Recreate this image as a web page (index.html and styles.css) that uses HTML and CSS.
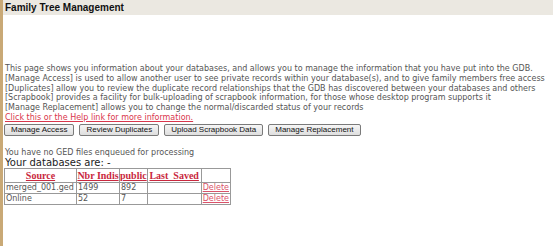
FILE: index.html
```html
<!DOCTYPE html>
<html lang="en">
<head>
  <meta charset="UTF-8">
  <title>Family Tree Management</title>
  <link rel="stylesheet" href="styles.css">
</head>
<body>
  <div class="page">
    <div class="titlebar">Family Tree Management</div>

    <div class="content">
      <!-- Intro text -->
      <p class="intro">
        This page shows you information about your databases, and allows you to manage the information that you have put into the GDB.<br>
        [Manage Access] is used to allow another user to see private records within your database(s), and to give family members free access<br>
        [Duplicates] allow you to review the duplicate record relationships that the GDB has discovered between your databases and others<br>
        [Scrapbook] provides a facility for bulk-uploading of scrapbook information, for those whose desktop program supports it<br>
        [Manage Replacement] allows you to change the normal/discarded status of your records<br>
        <a href="#" class="help-link">Click this or the Help link for more information.</a>
      </p>

      <div class="actions">
        <button>Manage Access</button>
        <button>Review Duplicates</button>
        <button>Upload Scrapbook Data</button>
        <button>Manage Replacement</button>
      </div>

      <p class="ged">You have no GED files enqueued for processing</p>
      <h3 class="db-title">Your databases are: -</h3>

      <table class="db-table">
        <thead>
          <tr>
            <th class="col-source"><a href="#">Source</a></th>
            <th class="col-nbr"><a href="#">Nbr Indis</a></th>
            <th class="col-public"><a href="#">public</a></th>
            <th class="col-saved"><a href="#">Last_Saved</a></th>
            <th class="col-action"></th>
          </tr>
        </thead>
        <tbody>
          <tr>
            <td>merged_001.ged</td>
            <td>1499</td>
            <td>892</td>
            <td></td>
            <td><a href="#">Delete</a></td>
          </tr>
          <tr>
            <td>Online</td>
            <td>52</td>
            <td>7</td>
            <td></td>
            <td><a href="#">Delete</a></td>
          </tr>
        </tbody>
      </table>
    </div>
  </div>
</body>
</html>
```

FILE: styles.css
```css
body {
  margin: 0;
  padding: 0;
  background-color: #fff;
  font-family: 'DejaVu Sans', Verdana, sans-serif;
  color: #555;
}

.page {
  min-height: 246px;
  border-left: 3px solid #c9a976;
  box-sizing: border-box;
}

.titlebar {
  background-color: #ebe8e1;
  font-family: 'Liberation Sans', Arial, sans-serif;
  font-weight: bold;
  font-size: 10px;
  color: #111;
  height: 15px;
  line-height: 15px;
  padding-left: 2px;
}

.content {
  padding: 0 1px;
}

.intro {
  margin: 49px 0 0 1px;
  font-size: 8px;
  line-height: 9.8px;
}

.help-link {
  color: #d9364c;
}

.actions {
  display: flex;
  gap: 5px;
  margin: 1px 0 0 0;
}

button {
  font-family: 'Liberation Sans', Arial, sans-serif;
  font-size: 8px;
  color: #111;
  height: 12px;
  padding: 0 6px;
  border: 1px solid #7a7a7a;
  border-radius: 2px;
  background: linear-gradient(#f6f6f6, #dedede);
  line-height: 10px;
}

.ged {
  margin: 12px 0 0 1px;
  font-size: 8px;
  line-height: 10px;
}

.db-title {
  margin: 0 0 0 1px;
  font-size: 10px;
  font-weight: normal;
  color: #222;
  line-height: 10px;
}

.db-table {
  border-collapse: collapse;
  border: 1px solid #555;
  font-size: 8px;
}

.db-table th,
.db-table td {
  border: 1px solid #999;
  padding: 0 1px;
  text-align: left;
  height: 10px;
  line-height: 10px;
}

.db-table th {
  font-family: 'Liberation Serif', 'Times New Roman', serif;
  font-size: 10px;
  height: 13px;
  line-height: 13px;
  text-align: center;
  padding: 0;
}

.db-table th a {
  color: #c9283e;
}

.db-table td a {
  color: #d9536a;
}

.col-source { width: 71px; }
.col-nbr { width: 42px; }
.col-public { width: 26px; }
.col-saved { width: 53px; }
.col-action { width: 28px; }
```
